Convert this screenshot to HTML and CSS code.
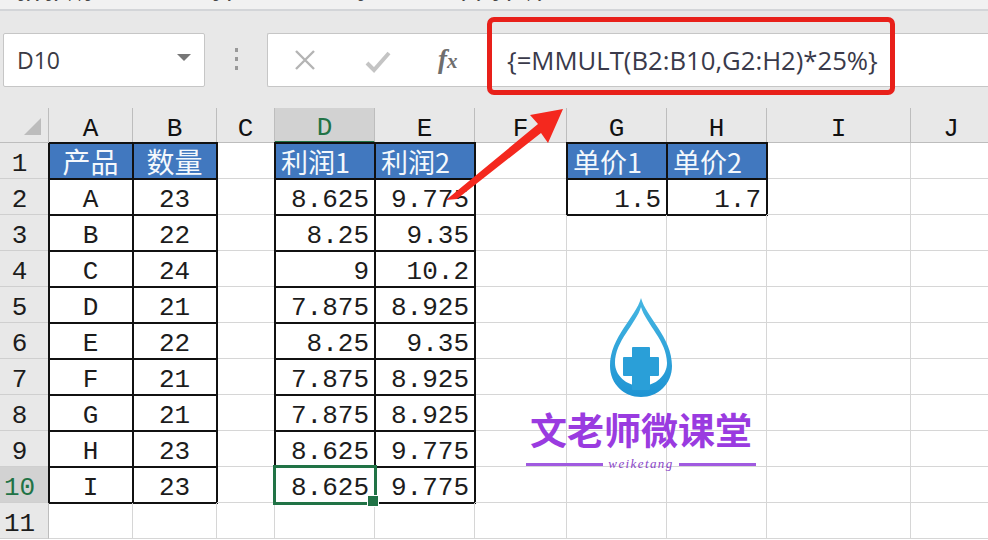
FILE: index.html
```html
<!DOCTYPE html>
<html lang="en">
<head>
    <meta charset="UTF-8">
    <meta name="viewport" content="width=device-width, initial-scale=1.0">
    <title>MMULT</title>
    <link rel="stylesheet" href="styles.css">
</head>
<body>

    <!-- Bottom edge of the ribbon labels -->
    <div class="ribbon-edge">
        <span class="ribbon-text first">gyygyqq</span>
        <span class="ribbon-text second">g</span>
        <span class="ribbon-text third">g y</span>
        <span class="ribbon-text fourth">g</span>
        <span class="ribbon-text fifth">y y g y q y</span>
    </div>

    <!-- Formula bar -->
    <div class="formula-row">
        <div class="name-box">
            <span>D10</span>
            <i class="name-arrow"></i>
        </div>
        <div class="grip"><i></i><i></i><i></i></div>
        <div class="formula-box">
            <div class="formula-buttons">
                <svg class="icon-cancel" width="22" height="22" viewBox="0 0 22 22">
                    <path d="M2 2 L20 20 M20 2 L2 20" stroke="#b4b4b4" stroke-width="2.4" fill="none"/>
                </svg>
                <svg class="icon-enter" width="26" height="22" viewBox="0 0 26 22">
                    <path d="M2 12 L9 19 L24 2" stroke="#c4c4c4" stroke-width="4" fill="none"/>
                </svg>
                <span class="icon-fx">f<small>x</small></span>
            </div>
            <div class="formula-text">{=MMULT(B2:B10,G2:H2)*25%}</div>
        </div>
    </div>

    <!-- Sheet -->
    <div class="sheet">
        <div class="corner"><i></i></div>
        <div class="col-head">A</div><div class="col-head">B</div><div class="col-head">C</div><div class="col-head active">D</div><div class="col-head">E</div><div class="col-head">F</div><div class="col-head">G</div><div class="col-head">H</div><div class="col-head">I</div><div class="col-head">J</div>

        <div class="row-head">1</div>
        <div class="cell boxed title">产品</div><div class="cell boxed title">数量</div><div class="cell"></div>
        <div class="cell boxed title left">利润1</div><div class="cell boxed title left">利润2</div><div class="cell"></div>
        <div class="cell boxed title left">单价1</div><div class="cell boxed title left">单价2</div><div class="cell"></div><div class="cell"></div>

        <div class="row-head">2</div>
        <div class="cell boxed mid">A</div><div class="cell boxed mid">23</div><div class="cell"></div>
        <div class="cell boxed num">8.625</div><div class="cell boxed num">9.775</div><div class="cell"></div>
        <div class="cell boxed num">1.5</div><div class="cell boxed num">1.7</div><div class="cell"></div><div class="cell"></div>

        <div class="row-head">3</div>
        <div class="cell boxed mid">B</div><div class="cell boxed mid">22</div><div class="cell"></div>
        <div class="cell boxed num">8.25</div><div class="cell boxed num">9.35</div><div class="cell"></div>
        <div class="cell"></div><div class="cell"></div><div class="cell"></div><div class="cell"></div>

        <div class="row-head">4</div>
        <div class="cell boxed mid">C</div><div class="cell boxed mid">24</div><div class="cell"></div>
        <div class="cell boxed num">9</div><div class="cell boxed num">10.2</div><div class="cell"></div>
        <div class="cell"></div><div class="cell"></div><div class="cell"></div><div class="cell"></div>

        <div class="row-head">5</div>
        <div class="cell boxed mid">D</div><div class="cell boxed mid">21</div><div class="cell"></div>
        <div class="cell boxed num">7.875</div><div class="cell boxed num">8.925</div><div class="cell"></div>
        <div class="cell"></div><div class="cell"></div><div class="cell"></div><div class="cell"></div>

        <div class="row-head">6</div>
        <div class="cell boxed mid">E</div><div class="cell boxed mid">22</div><div class="cell"></div>
        <div class="cell boxed num">8.25</div><div class="cell boxed num">9.35</div><div class="cell"></div>
        <div class="cell"></div><div class="cell"></div><div class="cell"></div><div class="cell"></div>

        <div class="row-head">7</div>
        <div class="cell boxed mid">F</div><div class="cell boxed mid">21</div><div class="cell"></div>
        <div class="cell boxed num">7.875</div><div class="cell boxed num">8.925</div><div class="cell"></div>
        <div class="cell"></div><div class="cell"></div><div class="cell"></div><div class="cell"></div>

        <div class="row-head">8</div>
        <div class="cell boxed mid">G</div><div class="cell boxed mid">21</div><div class="cell"></div>
        <div class="cell boxed num">7.875</div><div class="cell boxed num">8.925</div><div class="cell"></div>
        <div class="cell"></div><div class="cell"></div><div class="cell"></div><div class="cell"></div>

        <div class="row-head">9</div>
        <div class="cell boxed mid">H</div><div class="cell boxed mid">23</div><div class="cell"></div>
        <div class="cell boxed num">8.625</div><div class="cell boxed num">9.775</div><div class="cell"></div>
        <div class="cell"></div><div class="cell"></div><div class="cell"></div><div class="cell"></div>

        <div class="row-head active">10</div>
        <div class="cell boxed mid">I</div><div class="cell boxed mid">23</div><div class="cell"></div>
        <div class="cell boxed num selected">8.625</div><div class="cell boxed num">9.775</div><div class="cell"></div>
        <div class="cell"></div><div class="cell"></div><div class="cell"></div><div class="cell"></div>

        <div class="row-head">11</div>
        <div class="cell"></div><div class="cell"></div><div class="cell"></div>
        <div class="cell"></div><div class="cell"></div><div class="cell"></div>
        <div class="cell"></div><div class="cell"></div><div class="cell"></div><div class="cell"></div>
    </div>

    <!-- Annotations on top of the screenshot -->
    <div class="red-box"></div>

    <svg class="red-arrow" width="120" height="100" viewBox="445 106 120 100">
        <polygon points="446,200 538,124 530,115 563,109 548,143 541,133 457,199" fill="#f4281e"/>
    </svg>

    <div class="watermark">
        <svg width="66" height="102" viewBox="0 0 66 102">
            <defs>
                <linearGradient id="dropFill" x1="0" y1="0" x2="0" y2="1">
                    <stop offset="0" stop-color="#45b6e2"/>
                    <stop offset="1" stop-color="#1f94d3"/>
                </linearGradient>
            </defs>
            <path d="M33 1 C38 20 64 40 64 69 C64 87 50 100 33 100 C16 100 2 87 2 69 C2 40 28 20 33 1Z" fill="url(#dropFill)"/>
            <path d="M33 10 C38 27 59 44 59 66 C59 78 48 89 33 89 C18 89 7 78 7 66 C7 44 28 27 33 10Z" fill="#fff"/>
            <path d="M25 51 H41 V61 H50 V78 H41 V92 H25 V78 H16 V61 H25Z" fill="#2a9fd8" stroke="#2a9fd8" stroke-width="2" stroke-linejoin="round"/>
        </svg>
        <div class="watermark-title">文老师微课堂</div>
        <div class="watermark-sub"><i></i><span>weiketang</span><i></i></div>
    </div>

</body>
</html>
```

FILE: styles.css
```css
* {
    box-sizing: border-box;
    margin: 0;
    padding: 0;
}

body {
    width: 988px;
    height: 540px;
    overflow: hidden;
    position: relative;
    background-color: #fff;
    font-family: "Liberation Mono", monospace;
    color: #1c1c1c;
}

.ribbon-edge {
    height: 11px;
    overflow: hidden;
    position: relative;
    background-color: #f1f1f1;
    border-bottom: 2px solid #d3d5d8;
}

.ribbon-text {
    position: absolute;
    top: -16px;
    font-family: "Liberation Sans", sans-serif;
    font-size: 14px;
    line-height: 18px;
    letter-spacing: 2px;
    color: #444;
}

.ribbon-text.first { left: 17px; }
.ribbon-text.second { left: 84px; }
.ribbon-text.third { left: 212px; }
.ribbon-text.fourth { left: 357px; }
.ribbon-text.fifth { left: 462px; }

.formula-row {
    height: 97px;
    display: flex;
    align-items: flex-start;
    padding: 22px 0 0 3px;
    background-color: #e8e8e8;
}

.name-box {
    width: 202px;
    height: 54px;
    display: flex;
    align-items: center;
    justify-content: space-between;
    padding: 0 13px 0 13px;
    background-color: #fff;
    border: 1px solid #c6c6c6;
    border-radius: 2px;
    font-family: "Open Sans", sans-serif;
    font-size: 23px;
    color: #3a3a44;
}

.name-arrow {
    width: 0;
    height: 0;
    margin-top: -6px;
    border-left: 7px solid transparent;
    border-right: 7px solid transparent;
    border-top: 7px solid #777;
}

.grip {
    width: 62px;
    height: 54px;
    display: flex;
    flex-direction: column;
    align-items: center;
    justify-content: center;
    gap: 5px;
    padding-bottom: 2px;
}

.grip i {
    width: 3px;
    height: 4px;
    background-color: #999;
}

.formula-box {
    flex: 1;
    height: 54px;
    display: flex;
    align-items: center;
    background-color: #fff;
    border: 1px solid #c6c6c6;
    border-right: none;
    border-radius: 2px 0 0 2px;
}

.formula-buttons {
    width: 239px;
    display: flex;
    align-items: center;
    padding-left: 26px;
}

.icon-cancel {
    margin-right: 49px;
}

.icon-enter {
    margin-right: 47px;
    margin-top: 4px;
}

.icon-fx {
    font-family: "Liberation Serif", serif;
    font-style: italic;
    font-weight: bold;
    font-size: 27px;
    line-height: 30px;
    color: #6e6e6e;
}

.icon-fx small {
    font-size: 21px;
}

.formula-text {
    font-family: "Open Sans", sans-serif;
    font-size: 25.7px;
    color: #3a3a4a;
    white-space: nowrap;
}

.sheet {
    display: grid;
    grid-template-columns: 49px 84px 84px 58px 100px 100px 92px 100px 100px 144px 81px;
    grid-template-rows: 35px repeat(11, 36px);
}

.corner {
    position: relative;
    background-color: #e8e8e8;
    border-right: 1px solid #bdbdbd;
    border-bottom: 1px solid #bdbdbd;
}

/* Triangle in the select-all corner */
.corner i {
    position: absolute;
    left: 24px;
    top: 10px;
    width: 0;
    height: 0;
    border-left: 17px solid transparent;
    border-bottom: 17px solid #bcbcbc;
}

.col-head {
    display: flex;
    align-items: center;
    justify-content: center;
    padding-top: 7px;
    background-color: #e8e8e8;
    border-right: 1px solid #bdbdbd;
    border-bottom: 1px solid #bdbdbd;
    font-size: 26px;
    line-height: 26px;
    color: #111;
}

.col-head.active {
    background-color: #d2d2d2;
    border-bottom: 2px solid #217346;
    color: #217346;
}

.row-head {
    display: flex;
    align-items: center;
    justify-content: center;
    padding: 6px 9px 0 0;
    background-color: #e8e8e8;
    border-right: 1px solid #bdbdbd;
    border-bottom: 1px solid #cfcfcf;
    font-size: 26px;
    line-height: 26px;
}

.row-head.active {
    background-color: #d2d2d2;
    color: #217346;
}

.cell {
    display: flex;
    align-items: center;
    padding-top: 6px;
    border-right: 1px solid #d6d6d6;
    border-bottom: 1px solid #d6d6d6;
    font-size: 26px;
    line-height: 26px;
    white-space: nowrap;
}

.boxed {
    outline: 2px solid #111;
    outline-offset: -1px;
    background-color: #fff;
}

.mid {
    justify-content: center;
}

.num {
    justify-content: flex-end;
    padding-right: 5px;
}

.title {
    justify-content: center;
    padding-top: 1px;
    background-color: #4178bf;
    font-family: "Noto Sans CJK SC", sans-serif;
    font-size: 28px;
    line-height: 1;
    color: #f4f8fc;
}

.title.left {
    justify-content: flex-start;
    padding-left: 6px;
    font-size: 27px;
}

.selected {
    position: relative;
    z-index: 2;
    outline: 3px solid #217346;
    outline-offset: -1px;
}

/* Fill handle */
.selected::after {
    content: "";
    position: absolute;
    right: -5px;
    bottom: -5px;
    width: 10px;
    height: 10px;
    background-color: #217346;
    border: 1px solid #fff;
}

.red-box {
    position: absolute;
    left: 487px;
    top: 17px;
    width: 408px;
    height: 78px;
    border: 5px solid #e8201a;
    border-radius: 7px;
}

.red-arrow {
    position: absolute;
    left: 445px;
    top: 106px;
}

.watermark {
    position: absolute;
    left: 524px;
    top: 297px;
    width: 234px;
    display: flex;
    flex-direction: column;
    align-items: center;
}

.watermark-title {
    margin-top: 6px;
    font-family: "Noto Sans CJK SC", sans-serif;
    font-weight: bold;
    font-size: 37px;
    line-height: 48px;
    color: #9a3be0;
}

.watermark-sub {
    width: 230px;
    display: flex;
    align-items: center;
    gap: 5px;
    margin-top: 4px;
    font-family: "Liberation Serif", serif;
    font-style: italic;
    font-size: 13px;
    line-height: 14px;
    letter-spacing: 1.4px;
    color: #8a45c8;
}

.watermark-sub i {
    flex: 1;
    height: 3px;
    background-color: #a05ae0;
}
```
